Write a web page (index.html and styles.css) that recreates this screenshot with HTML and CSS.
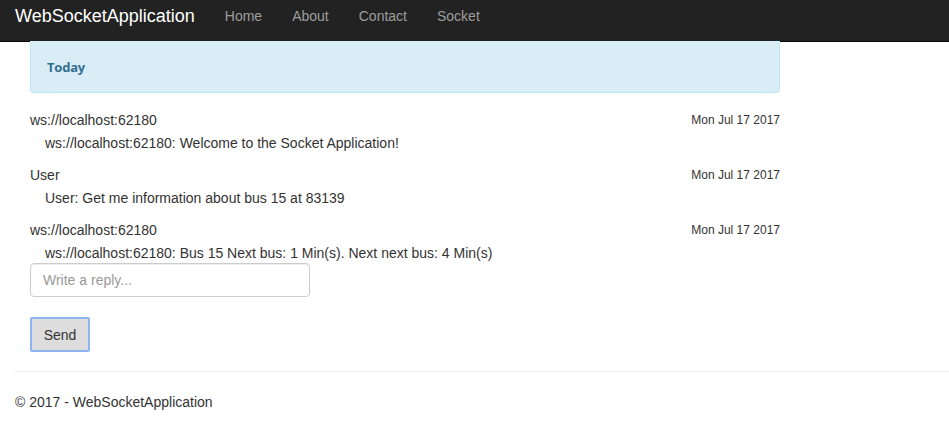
FILE: index.html
```html
<!DOCTYPE html>
<html>
<head>
<meta charset="utf-8">
<link rel="stylesheet" href="styles.css">
</head>
<body>
<nav class="navbar">
  <a class="brand">WebSocketApplication</a>
  <ul class="nav">
    <li><a>Home</a></li>
    <li><a>About</a></li>
    <li><a>Contact</a></li>
    <li><a>Socket</a></li>
  </ul>
</nav>
<main class="content">
  <div class="panel"><span class="panel-title">Today</span></div>
  <div class="messages">
    <div class="msg">
      <div class="msg-head"><span>ws://localhost:62180</span><span class="date">Mon Jul 17 2017</span></div>
      <div class="msg-body">ws://localhost:62180: Welcome to the Socket Application!</div>
    </div>
    <div class="msg">
      <div class="msg-head"><span>User</span><span class="date">Mon Jul 17 2017</span></div>
      <div class="msg-body">User: Get me information about bus 15 at 83139</div>
    </div>
    <div class="msg">
      <div class="msg-head"><span>ws://localhost:62180</span><span class="date">Mon Jul 17 2017</span></div>
      <div class="msg-body">ws://localhost:62180: Bus 15 Next bus: 1 Min(s). Next next bus: 4 Min(s)</div>
    </div>
  </div>
  <input class="reply" type="text" placeholder="Write a reply...">
  <button class="send">Send</button>
</main>
<hr class="rule">
<footer class="footer">© 2017 - WebSocketApplication</footer>
</body>
</html>
```
FILE: styles.css
```css
* { box-sizing: border-box; }
html, body { margin: 0; padding: 0; }
body {
  font-family: "Liberation Sans", Arial, sans-serif;
  font-size: 14px;
  line-height: 20px;
  color: #333;
  background: #fff;
  overflow: hidden;
}
.navbar {
  height: 42px;
  background: #222;
  border-bottom: 1px solid #080808;
  display: flex;
  align-items: center;
}
.brand {
  color: #fff;
  font-size: 18px;
  padding: 0 15px;
  line-height: 20px;
  margin-top: -9px;
}
.nav {
  list-style: none;
  margin: -9px 0 0 0;
  padding: 0;
  display: flex;
}
.nav a {
  display: block;
  padding: 0 15px;
  color: #9d9d9d;
  line-height: 20px;
}
.content {
  padding-left: 30px;
  width: 780px;
}
.panel {
  height: 52px;
  margin-top: -1px;
  background: #d9edf7;
  border: 1px solid #bce8f1;
  border-top: none;
  border-radius: 0 0 4px 4px;
  padding: 0 16px;
  display: flex;
  align-items: center;
  margin-bottom: 17px;
}
.panel-title {
  font-family: "Open Sans", sans-serif;
  font-weight: 700;
  font-size: 13px;
  color: #31708f;
  letter-spacing: -0.2px;
}
.msg { margin-bottom: 12px; }
.msg:last-child { margin-bottom: 0; }
.msg-head {
  display: flex;
  justify-content: space-between;
  align-items: center;
  height: 20px;
}
.date { font-size: 12px; }
.msg-body {
  margin-top: 3px;
  padding-left: 15px;
}
.reply {
  display: block;
  width: 280px;
  height: 34px;
  padding: 6px 12px;
  border: 1px solid #ccc;
  border-radius: 4px;
  font-family: "Liberation Sans", Arial, sans-serif;
  font-size: 14px;
  color: #555;
  box-shadow: inset 0 1px 1px rgba(0,0,0,0.075);
  outline: none;
}
.reply::placeholder { color: #999; }
.send {
  display: block;
  margin-top: 20px;
  width: 60px;
  height: 35px;
  background: #ddd;
  border: 2px solid #8fb4f0;
  border-radius: 2px;
  font-family: "Liberation Sans", Arial, sans-serif;
  font-size: 14px;
  color: #333;
  padding: 0;
}
.rule {
  margin: 19px 0 0 15px;
  border: 0;
  border-top: 1px solid #eee;
}
.footer {
  padding: 20px 15px;
}
```
